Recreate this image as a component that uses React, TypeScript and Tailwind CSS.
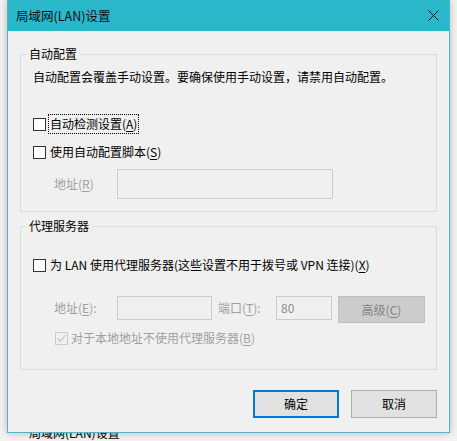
import type { ReactNode } from "react";

const FONT = "font-['Noto_Sans_CJK_SC','Noto_Sans',sans-serif]";

function Key({ children }: { children: ReactNode }) {
  return <span className="underline underline-offset-2 decoration-1">{children}</span>;
}

function CheckBox({ checked = false, disabled = false }: { checked?: boolean; disabled?: boolean }) {
  return (
    <span
      className={`flex h-[13px] w-[13px] shrink-0 items-center justify-center border ${
        disabled ? "border-[#cccccc] bg-[#f0f0f0]" : "border-[#333333] bg-white"
      }`}
    >
      {checked && (
        <svg width="11" height="11" viewBox="0 0 11 11">
          <path d="M1.5 5.5 L4.2 8.3 L9.5 2.2" fill="none" stroke={disabled ? "#c4c4c4" : "#333"} strokeWidth="1.2" />
        </svg>
      )}
    </span>
  );
}

function GroupBox({ title, children, className = "" }: { title: string; children: ReactNode; className?: string }) {
  return (
    <div className={`mx-[12px] flex flex-col border border-[#dcdcdc] pl-[12px] ${className}`}>
      <span className="-mt-[9px] ml-[-7px] w-fit bg-[#f0f0f0] px-[3px] leading-[16px] text-black">{title}</span>
      {children}
    </div>
  );
}

export default function App() {
  return (
    <div className={`flex h-[441px] w-[457px] flex-col overflow-hidden bg-[#f2f2f2] text-[12px] ${FONT}`}>
      <div className="relative z-10 ml-[7px] flex h-[433px] w-[443px] shrink-0 flex-col border-x border-b border-[#52b3c8] bg-[#f0f0f0] shadow-[0_0_7px_rgba(0,0,0,0.25)]">
        {/* title bar */}
        <div className="flex h-[31px] shrink-0 items-center justify-between bg-[#2bb7ca] pl-[8px] pr-[9px]">
          <span className="text-[12.5px] leading-[16px] text-[#111]">局域网(LAN)设置</span>
          <svg width="11" height="11" viewBox="0 0 11 11" className="mr-[1px]">
            <path d="M0.5 0.5 L10.5 10.5 M10.5 0.5 L0.5 10.5" stroke="#111" strokeWidth="1" />
          </svg>
        </div>

        {/* automatic configuration */}
        <GroupBox title="自动配置" className="mt-[23px] pb-[12px]">
          <p className="mt-[7px] leading-[16px] text-black">
            自动配置会覆盖手动设置。要确保使用手动设置，请禁用自动配置。
          </p>
          <label className="mt-[29px] flex h-[20px] items-center gap-[4px] text-black">
            <CheckBox />
            <span className="leading-[16px] outline-1 outline-dotted outline-black outline-offset-1">
              自动检测设置(<Key>A</Key>)
            </span>
          </label>
          <label className="mt-[8px] flex h-[20px] items-center gap-[4px] text-black">
            <CheckBox />
            <span className="leading-[16px]">
              使用自动配置脚本(<Key>S</Key>)
            </span>
          </label>
          <div className="mt-[7px] ml-[21px] flex items-center">
            <span className="w-[63px] leading-[16px] text-[#a0a0a0]">
              地址(<Key>R</Key>)
            </span>
            <div className="h-[30px] w-[216px] border border-[#cccccc] bg-[#f0f0f0]" />
          </div>
        </GroupBox>

        {/* proxy server */}
        <GroupBox title="代理服务器" className="mt-[14px] pb-[21px]">
          <label className="mt-[21px] flex h-[20px] items-center gap-[4px] text-black">
            <CheckBox />
            <span className="leading-[16px]">
              为 LAN 使用代理服务器(这些设置不用于拨号或 VPN 连接)(<Key>X</Key>)
            </span>
          </label>
          <div className="mt-[21px] ml-[21px] flex h-[27px] items-start text-[#a0a0a0]">
            <span className="flex h-[24px] w-[63px] items-center leading-[16px]">
              地址(<Key>E</Key>):
            </span>
            <div className="h-[24px] w-[95px] border border-[#cccccc] bg-[#f0f0f0]" />
            <span className="ml-[6px] flex h-[24px] w-[58px] items-center leading-[16px]">
              端口(<Key>T</Key>):
            </span>
            <div className="flex h-[24px] w-[56px] items-center border border-[#cccccc] bg-[#f0f0f0] pl-[4px] leading-[16px] text-[#8c8c8c]">
              80
            </div>
            <div className="ml-[6px] flex h-[27px] w-[87px] items-center justify-center border border-[#bfbfbf] bg-[#cccccc] leading-[16px] text-[#838383]">
              高级(<Key>C</Key>)
            </div>
          </div>
          <label className="mt-[5px] ml-[22px] flex h-[20px] items-center gap-[3px] text-[#a0a0a0]">
            <CheckBox checked disabled />
            <span className="leading-[16px]">
              对于本地地址不使用代理服务器(<Key>B</Key>)
            </span>
          </label>
        </GroupBox>

        {/* dialog buttons */}
        <div className="mt-[20px] mr-[12px] flex justify-end gap-[12px]">
          <button className="flex h-[28px] w-[86px] items-center justify-center border-2 border-[#0078d7] bg-[#e1e1e1] leading-[16px] text-black">
            确定
          </button>
          <button className="flex h-[28px] w-[86px] items-center justify-center border border-[#adadad] bg-[#e1e1e1] leading-[16px] text-black">
            取消
          </button>
        </div>
      </div>

      {/* window behind the dialog, only its lower edge shows */}
      <span className="-mt-[8px] ml-[29px] leading-[16px] text-black">局域网(LAN)设置</span>
    </div>
  );
}
